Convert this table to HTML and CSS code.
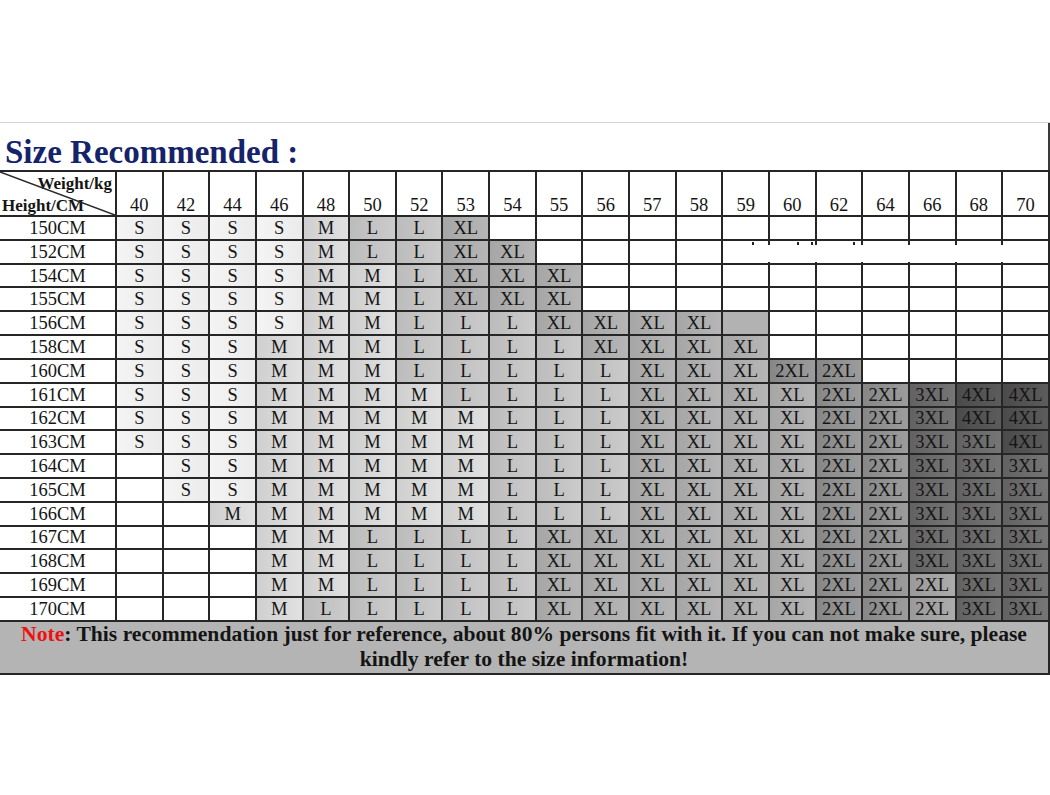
FILE: index.html
```html
<!DOCTYPE html>
<html lang="en">
<head>
<meta charset="utf-8">
<title>Size Recommended</title>
<link rel="stylesheet" href="styles.css">
</head>
<body>
<div class="sheet">
  <h1 class="title">Size Recommended :</h1>
  <table class="chart">
    <colgroup><col class="c-label"><col span="20" class="c-w"></colgroup>
    <thead>
      <tr class="head">
        <th class="corner">
          <svg class="diag" viewBox="0 0 100 100" preserveAspectRatio="none"><line x1="0" y1="0" x2="100" y2="100"/></svg>
          <div class="corner-box"><span class="wt">Weight/kg</span><span class="ht">Height/CM</span></div>
        </th>
        <th>40</th><th>42</th><th>44</th><th>46</th><th>48</th><th>50</th><th>52</th><th>53</th><th>54</th><th>55</th><th>56</th><th>57</th><th>58</th><th>59</th><th>60</th><th>62</th><th>64</th><th>66</th><th>68</th><th>70</th>
      </tr>
    </thead>
    <tbody>
      <tr class="r"><td class="h">150CM</td><td class="s">S</td><td class="s">S</td><td class="s">S</td><td class="s">S</td><td class="m">M</td><td class="l">L</td><td class="l">L</td><td class="xl">XL</td><td></td><td></td><td></td><td></td><td></td><td></td><td></td><td></td><td></td><td></td><td></td><td></td></tr>
      <tr class="r"><td class="h">152CM</td><td class="s">S</td><td class="s">S</td><td class="s">S</td><td class="s">S</td><td class="m">M</td><td class="l">L</td><td class="l">L</td><td class="xl">XL</td><td class="xl">XL</td><td></td><td></td><td></td><td></td><td></td><td></td><td></td><td></td><td></td><td></td><td></td></tr>
      <tr class="r"><td class="h">154CM</td><td class="s">S</td><td class="s">S</td><td class="s">S</td><td class="s">S</td><td class="m">M</td><td class="m">M</td><td class="l">L</td><td class="xl">XL</td><td class="xl">XL</td><td class="xl">XL</td><td></td><td></td><td></td><td></td><td></td><td></td><td></td><td></td><td></td><td></td></tr>
      <tr class="r"><td class="h">155CM</td><td class="s">S</td><td class="s">S</td><td class="s">S</td><td class="s">S</td><td class="m">M</td><td class="m">M</td><td class="l">L</td><td class="xl">XL</td><td class="xl">XL</td><td class="xl">XL</td><td></td><td></td><td></td><td></td><td></td><td></td><td></td><td></td><td></td><td></td></tr>
      <tr class="r"><td class="h">156CM</td><td class="s">S</td><td class="s">S</td><td class="s">S</td><td class="s">S</td><td class="m">M</td><td class="m">M</td><td class="l">L</td><td class="l">L</td><td class="l">L</td><td class="xl">XL</td><td class="xl">XL</td><td class="xl">XL</td><td class="xl">XL</td><td class="g"></td><td></td><td></td><td></td><td></td><td></td><td></td></tr>
      <tr class="r"><td class="h">158CM</td><td class="s">S</td><td class="s">S</td><td class="s">S</td><td class="m">M</td><td class="m">M</td><td class="m">M</td><td class="l">L</td><td class="l">L</td><td class="l">L</td><td class="l">L</td><td class="xl">XL</td><td class="xl">XL</td><td class="xl">XL</td><td class="xl">XL</td><td></td><td></td><td></td><td></td><td></td><td></td></tr>
      <tr class="r"><td class="h">160CM</td><td class="s">S</td><td class="s">S</td><td class="s">S</td><td class="m">M</td><td class="m">M</td><td class="m">M</td><td class="l">L</td><td class="l">L</td><td class="l">L</td><td class="l">L</td><td class="l">L</td><td class="xl">XL</td><td class="xl">XL</td><td class="xl">XL</td><td class="x2">2XL</td><td class="x2">2XL</td><td></td><td></td><td></td><td></td></tr>
      <tr class="r"><td class="h">161CM</td><td class="s">S</td><td class="s">S</td><td class="s">S</td><td class="m">M</td><td class="m">M</td><td class="m">M</td><td class="m">M</td><td class="l">L</td><td class="l">L</td><td class="l">L</td><td class="l">L</td><td class="xl">XL</td><td class="xl">XL</td><td class="xl">XL</td><td class="xl">XL</td><td class="x2">2XL</td><td class="x2">2XL</td><td class="x3">3XL</td><td class="x4">4XL</td><td class="x4">4XL</td></tr>
      <tr class="r"><td class="h">162CM</td><td class="s">S</td><td class="s">S</td><td class="s">S</td><td class="m">M</td><td class="m">M</td><td class="m">M</td><td class="m">M</td><td class="m">M</td><td class="l">L</td><td class="l">L</td><td class="l">L</td><td class="xl">XL</td><td class="xl">XL</td><td class="xl">XL</td><td class="xl">XL</td><td class="x2">2XL</td><td class="x2">2XL</td><td class="x3">3XL</td><td class="x4">4XL</td><td class="x4">4XL</td></tr>
      <tr class="r"><td class="h">163CM</td><td class="s">S</td><td class="s">S</td><td class="s">S</td><td class="m">M</td><td class="m">M</td><td class="m">M</td><td class="m">M</td><td class="m">M</td><td class="l">L</td><td class="l">L</td><td class="l">L</td><td class="xl">XL</td><td class="xl">XL</td><td class="xl">XL</td><td class="xl">XL</td><td class="x2">2XL</td><td class="x2">2XL</td><td class="x3">3XL</td><td class="x3">3XL</td><td class="x4">4XL</td></tr>
      <tr class="r"><td class="h">164CM</td><td></td><td class="s">S</td><td class="s">S</td><td class="m">M</td><td class="m">M</td><td class="m">M</td><td class="m">M</td><td class="m">M</td><td class="l">L</td><td class="l">L</td><td class="l">L</td><td class="xl">XL</td><td class="xl">XL</td><td class="xl">XL</td><td class="xl">XL</td><td class="x2">2XL</td><td class="x2">2XL</td><td class="x3">3XL</td><td class="x3">3XL</td><td class="x3">3XL</td></tr>
      <tr class="r"><td class="h">165CM</td><td></td><td class="s">S</td><td class="s">S</td><td class="m">M</td><td class="m">M</td><td class="m">M</td><td class="m">M</td><td class="m">M</td><td class="l">L</td><td class="l">L</td><td class="l">L</td><td class="xl">XL</td><td class="xl">XL</td><td class="xl">XL</td><td class="xl">XL</td><td class="x2">2XL</td><td class="x2">2XL</td><td class="x3">3XL</td><td class="x3">3XL</td><td class="x3">3XL</td></tr>
      <tr class="r"><td class="h">166CM</td><td></td><td></td><td class="m">M</td><td class="m">M</td><td class="m">M</td><td class="m">M</td><td class="m">M</td><td class="m">M</td><td class="l">L</td><td class="l">L</td><td class="l">L</td><td class="xl">XL</td><td class="xl">XL</td><td class="xl">XL</td><td class="xl">XL</td><td class="x2">2XL</td><td class="x2">2XL</td><td class="x3">3XL</td><td class="x3">3XL</td><td class="x3">3XL</td></tr>
      <tr class="r"><td class="h">167CM</td><td></td><td></td><td></td><td class="m">M</td><td class="m">M</td><td class="l">L</td><td class="l">L</td><td class="l">L</td><td class="l">L</td><td class="xl">XL</td><td class="xl">XL</td><td class="xl">XL</td><td class="xl">XL</td><td class="xl">XL</td><td class="xl">XL</td><td class="x2">2XL</td><td class="x2">2XL</td><td class="x3">3XL</td><td class="x3">3XL</td><td class="x3">3XL</td></tr>
      <tr class="r"><td class="h">168CM</td><td></td><td></td><td></td><td class="m">M</td><td class="m">M</td><td class="l">L</td><td class="l">L</td><td class="l">L</td><td class="l">L</td><td class="xl">XL</td><td class="xl">XL</td><td class="xl">XL</td><td class="xl">XL</td><td class="xl">XL</td><td class="xl">XL</td><td class="x2">2XL</td><td class="x2">2XL</td><td class="x3">3XL</td><td class="x3">3XL</td><td class="x3">3XL</td></tr>
      <tr class="r"><td class="h">169CM</td><td></td><td></td><td></td><td class="m">M</td><td class="m">M</td><td class="l">L</td><td class="l">L</td><td class="l">L</td><td class="l">L</td><td class="xl">XL</td><td class="xl">XL</td><td class="xl">XL</td><td class="xl">XL</td><td class="xl">XL</td><td class="xl">XL</td><td class="x2">2XL</td><td class="x2">2XL</td><td class="x2 lt">2XL</td><td class="x3">3XL</td><td class="x3">3XL</td></tr>
      <tr class="r"><td class="h">170CM</td><td></td><td></td><td></td><td class="m">M</td><td class="l">L</td><td class="l">L</td><td class="l">L</td><td class="l">L</td><td class="l">L</td><td class="xl">XL</td><td class="xl">XL</td><td class="xl">XL</td><td class="xl">XL</td><td class="xl">XL</td><td class="xl">XL</td><td class="x2">2XL</td><td class="x2">2XL</td><td class="x2 lt">2XL</td><td class="x3">3XL</td><td class="x3">3XL</td></tr>
    </tbody>
    <tfoot>
      <tr><td class="note" colspan="21"><span class="note-key">Note</span>: This recommendation just for reference, about 80% persons fit with it. If you can not make sure, please<br>kindly refer to the size information!</td></tr>
    </tfoot>
  </table>
  <div class="smudge"><i class="dot d1"></i><i class="dot d2"></i><i class="dot d3"></i><i class="dot d4"></i></div>
</div>
</body>
</html>
```
FILE: styles.css
```css
html, body {
  margin: 0;
  padding: 0;
  background: #ffffff;
}
body {
  font-family: "Liberation Serif", "Times New Roman", serif;
  color: #151515;
}
.sheet {
  position: relative;
  width: 1050px;
  margin-top: 122px;
  border-top: 1px solid #d4d4d4;
}
.title {
  margin: 0;
  padding: 11px 0 0 5px;
  height: 47px;
  box-sizing: border-box;
  font-size: 33px;
  line-height: 36px;
  font-weight: bold;
  color: #15236a;
  border-right: 2px solid #3a3a3a;
}
.chart {
  width: 1050px;
  border-collapse: collapse;
  table-layout: fixed;
  font-size: 18.5px;
}
.c-label { width: 116px; }
.chart th,
.chart td {
  border: 2px solid #262626;
  padding: 0;
  text-align: center;
  white-space: nowrap;
  overflow: hidden;
}
.chart tr > :first-child { border-left: none; }
.head { height: 45px; }
.head th {
  font-weight: normal;
  vertical-align: bottom;
  line-height: 20px;
  background: #ffffff;
}
.corner {
  position: relative;
}
.diag {
  position: absolute;
  left: 0;
  top: 0;
  width: 100%;
  height: 100%;
}
.diag line {
  stroke: #2a2a2a;
  stroke-width: 1.6;
  vector-effect: non-scaling-stroke;
}
.corner-box {
  display: flex;
  flex-direction: column;
  justify-content: space-between;
  height: 43px;
  font-weight: bold;
  font-size: 17px;
  line-height: 19px;
  padding: 2px 3px 0 3px;
  box-sizing: border-box;
}
.wt { align-self: flex-end; }
.ht { align-self: flex-start; margin-left: -1px; }
.r { height: 23.82px; }
.r td {
  line-height: 20px;
  vertical-align: middle;
  background: #ffffff;
}
.r td.h { background: #ffffff; }
.r td.s  { background: linear-gradient(90deg, #f4f4f4, #ebebeb); }
.r td.m  { background: linear-gradient(90deg, #cfcfcf, #e1e1e1); }
.r td.l  { background: linear-gradient(90deg, #bcbcbc, #cbcbcb); }
.r td.xl { background: linear-gradient(90deg, #a6a6a6, #b6b6b6); }
.r td.g  { background: #b2b2b2; }
.r td.x2 { background: linear-gradient(90deg, #878787, #9c9c9c); }
.r td.x2.lt { background: linear-gradient(90deg, #9a9a9a, #acacac); }
.r td.x3 { background: linear-gradient(90deg, #626262, #767676); }
.r td.x4 { background: linear-gradient(90deg, #4b4b4b, #5c5c5c); }
.note {
  background: #b4b4b4;
  font-weight: bold;
  font-size: 21.6px;
  line-height: 25.5px;
  padding: 0;
  color: #141414;
  white-space: normal !important;
}
.note-key { color: #ee1111; }
.smudge {
  position: absolute;
  left: 745px;
  top: 122px;
  width: 303px;
  height: 17px;
  background: #ffffff;
}
.dot {
  position: absolute;
  top: -3px;
  width: 2px;
  height: 3px;
  background: #222;
}
.d1 { left: 7px; }
.d2 { left: 52px; }
.d3 { left: 66px; }
.d4 { left: 108px; }
```
